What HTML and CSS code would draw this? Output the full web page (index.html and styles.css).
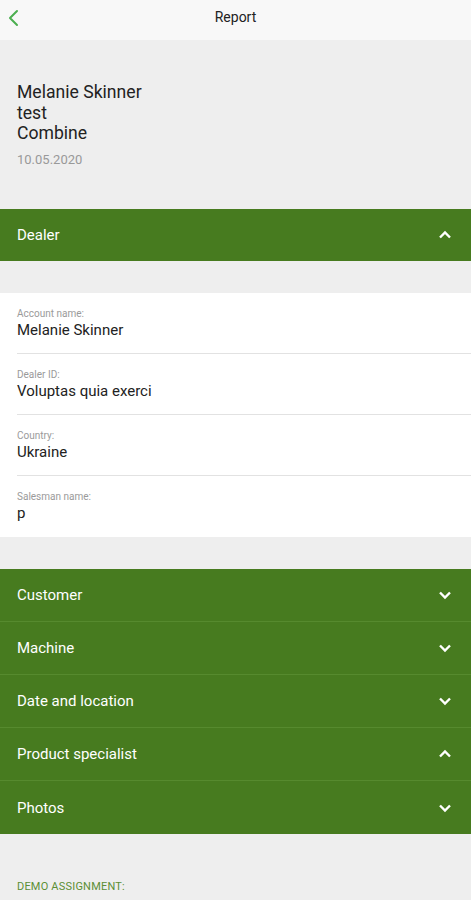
FILE: index.html
```html
<!DOCTYPE html>
<html>
<head>
<meta charset="utf-8">
<link rel="stylesheet" href="styles.css">
</head>
<body>
<header class="topbar">
  <svg class="back" width="14" height="18" viewBox="0 0 14 18"><path d="M11 2 L4 9 L11 16" fill="none" stroke="#4caf50" stroke-width="2" stroke-linecap="round" stroke-linejoin="round"/></svg>
  <div class="title">Report</div>
</header>
<section class="summary">
  <div class="big">Melanie Skinner</div>
  <div class="big">test</div>
  <div class="big">Combine</div>
  <div class="date">10.05.2020</div>
</section>
<div class="acc single">
  <div class="acc-row"><span>Dealer</span><svg class="chev" width="14" height="10" viewBox="0 0 14 10"><path d="M2 7.5 L7 2.5 L12 7.5" fill="none" stroke="#fff" stroke-width="2.4"/></svg></div>
</div>
<div class="card">
  <div class="field"><div class="label">Account name:</div><div class="value">Melanie Skinner</div></div>
  <div class="field"><div class="label">Dealer ID:</div><div class="value">Voluptas quia exerci</div></div>
  <div class="field"><div class="label">Country:</div><div class="value">Ukraine</div></div>
  <div class="field last"><div class="label">Salesman name:</div><div class="value">p</div></div>
</div>
<div class="acc group">
  <div class="acc-row"><span>Customer</span><svg class="chev" width="14" height="10" viewBox="0 0 14 10"><path d="M2 2.5 L7 7.5 L12 2.5" fill="none" stroke="#fff" stroke-width="2.4"/></svg></div>
  <div class="acc-row"><span>Machine</span><svg class="chev" width="14" height="10" viewBox="0 0 14 10"><path d="M2 2.5 L7 7.5 L12 2.5" fill="none" stroke="#fff" stroke-width="2.4"/></svg></div>
  <div class="acc-row"><span>Date and location</span><svg class="chev" width="14" height="10" viewBox="0 0 14 10"><path d="M2 2.5 L7 7.5 L12 2.5" fill="none" stroke="#fff" stroke-width="2.4"/></svg></div>
  <div class="acc-row"><span>Product specialist</span><svg class="chev" width="14" height="10" viewBox="0 0 14 10"><path d="M2 7.5 L7 2.5 L12 7.5" fill="none" stroke="#fff" stroke-width="2.4"/></svg></div>
  <div class="acc-row"><span>Photos</span><svg class="chev" width="14" height="10" viewBox="0 0 14 10"><path d="M2 2.5 L7 7.5 L12 2.5" fill="none" stroke="#fff" stroke-width="2.4"/></svg></div>
</div>
<div class="demo">DEMO ASSIGNMENT:</div>
</body>
</html>
```
FILE: styles.css
```css
html, body {
  margin: 0;
  padding: 0;
  background: #eeeeee;
  font-family: Roboto, "Noto Sans", sans-serif;
}
.topbar {
  height: 40px;
  background: #f8f8f8;
  display: flex;
  align-items: center;
  justify-content: center;
  position: relative;
}
.back {
  position: absolute;
  left: 6px;
  top: 9px;
}
.title {
  font-size: 14px;
  color: #222;
  margin-top: -6px;
}
.summary {
  padding: 42px 17px 0 17px;
  height: 127px;
}
.big {
  font-size: 17.6px;
  line-height: 20.5px;
  color: #222;
}
.date {
  font-size: 13px;
  color: #999;
  margin-top: 8px;
}
.acc {
  background: #477b1f;
}
.acc-row {
  display: flex;
  align-items: center;
  justify-content: space-between;
  padding: 0 19px 0 17px;
  color: #fff;
  font-size: 15px;
}
.single .acc-row {
  height: 52px;
}
.group {
  margin-top: 32px;
}
.group .acc-row {
  height: 52px;
  border-bottom: 1px solid #568a2e;
}
.group .acc-row:last-child {
  border-bottom: none;
  height: 53px;
}
.card {
  margin-top: 32px;
  background: #fff;
}
.field {
  margin-left: 17px;
  height: 61px;
  border-bottom: 1px solid #e2e2e2;
  box-sizing: border-box;
  padding-top: 15px;
}
.field.last {
  border-bottom: none;
  height: 61px;
}
.label {
  font-size: 10px;
  color: #9a9a9a;
  line-height: 12px;
}
.value {
  font-size: 15px;
  color: #222;
  line-height: 18px;
  margin-top: 1px;
}
.demo {
  padding: 46px 17px 0 17px;
  font-size: 11px;
  color: #5c8f35;
  letter-spacing: 0.2px;
}
```
